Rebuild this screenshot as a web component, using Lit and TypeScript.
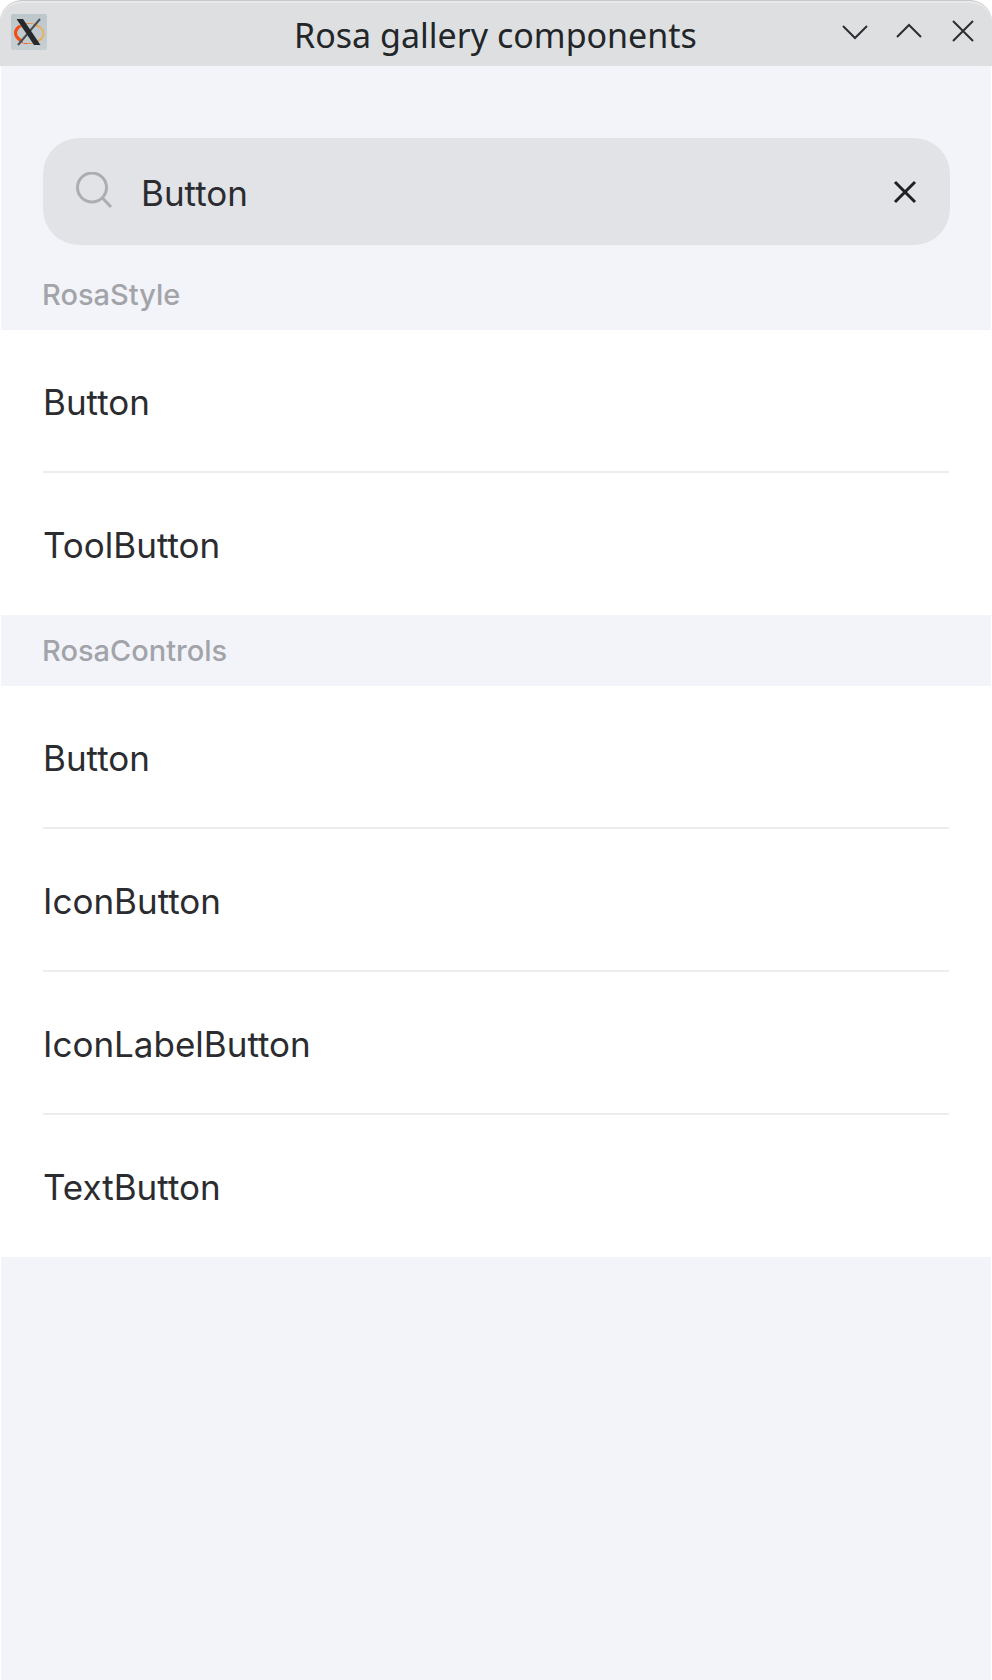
import { LitElement, html, css } from "lit";
import { customElement, property, state } from "lit/decorators.js";

interface Section {
  title: string;
  items: string[];
}

const SECTIONS: Section[] = [
  { title: "RosaStyle", items: ["Button", "ToolButton"] },
  { title: "RosaControls", items: ["Button", "IconButton", "IconLabelButton", "TextButton"] },
];

@customElement("title-bar")
class TitleBar extends LitElement {
  @property() heading = "";

  static styles = css`
    :host { display: block; }
    .bar {
      display: grid;
      grid-template-columns: 1fr auto 1fr;
      align-items: center;
      box-sizing: border-box;
      height: 66px;
      padding: 0 11px 0 10px;
      background: #dedfe1;
      border-top: 1px solid #c9cacc;
      box-shadow: inset 0 2px 0 #e8e9ea;
      border-radius: 22px 22px 0 0;
    }
    .logo { display: block; width: 38px; height: 38px; margin-bottom: 4px; }
    .heading {
      margin: 0;
      padding-top: 3px;
      font: 400 34px/44px "Noto Sans", sans-serif;
      color: #232629;
      white-space: nowrap;
    }
    .controls { display: flex; justify-content: flex-end; gap: 18px; }
    .control {
      display: block;
      width: 36px;
      height: 36px;
      margin-bottom: 6px;
      padding: 0;
      border: 0;
      background: none;
    }
    .glyph { display: block; fill: none; stroke: #2a2e32; stroke-width: 2; }
  `;

  render() {
    return html`
      <header class="bar">
        <svg class="logo" viewBox="0 0 38 38" aria-hidden="true">
          <defs>
            <linearGradient id="ring" x1="0" x2="1">
              <stop offset="0" stop-color="#f04e14" />
              <stop offset=".5" stop-color="#f08a4a" />
              <stop offset="1" stop-color="#e9b45c" />
            </linearGradient>
            <linearGradient id="tile" x1="0" y1="0" x2="0" y2="1">
              <stop offset="0" stop-color="#bcc7cc" />
              <stop offset="1" stop-color="#c6cfd2" />
            </linearGradient>
          </defs>
          <rect x="1" y="1" width="36" height="36" rx="2" fill="url(#tile)" />
          <ellipse cx="19.500" cy="20.500" rx="14" ry="9.500" fill="none" stroke="url(#ring)" stroke-width="2" />
          <path d="M10 13 C5 16 4 21 8 25 C10 27.500 13 29 17 29.500" fill="none" stroke="#f04e14" stroke-width="3" />
          <path d="M16 11 H23 L26 30 H13 L10 20 Z" fill="#c1cbcf" />
          <path d="M30 6 L8 32" stroke="#4a4f52" stroke-width="2" />
          <path d="M6.500 6 H13 L30.500 32 H24 Z" fill="#25292b" />
        </svg>
        <h1 class="heading">${this.heading}</h1>
        <div class="controls">
          <button class="control" aria-label="Minimize">
            <svg class="glyph" viewBox="0 0 36 36"><path d="M6 13 L18 25 L30 13" /></svg>
          </button>
          <button class="control" aria-label="Maximize">
            <svg class="glyph" viewBox="0 0 36 36"><path d="M6 24 L18 12 L30 24" /></svg>
          </button>
          <button class="control" aria-label="Close">
            <svg class="glyph" viewBox="0 0 36 36"><path d="M8 8 L28 28 M28 8 L8 28" /></svg>
          </button>
        </div>
      </header>
    `;
  }
}

@customElement("search-field")
class SearchField extends LitElement {
  @state() private query = "Button";

  static styles = css`
    :host { display: block; }
    .field {
      display: flex;
      align-items: center;
      box-sizing: border-box;
      height: 107px;
      padding: 0 27px 0 30px;
      border-radius: 36px;
      background: #e2e3e7;
    }
    .lens { display: block; flex: none; width: 40px; height: 40px; fill: none; stroke: #abaeb1; stroke-width: 3; }
    .input {
      flex: 1;
      min-width: 0;
      height: 48px;
      margin: 2px 0 0 28px;
      padding: 0;
      border: 0;
      outline: 0;
      background: none;
      font: 400 35px/48px Inter, sans-serif;
      color: #2b2c30;
    }
    .clear { display: block; flex: none; width: 36px; height: 36px; padding: 0; border: 0; background: none; }
    .cross { display: block; fill: none; stroke: #1f2023; stroke-width: 3; }
  `;

  render() {
    return html`
      <div class="field">
        <label for="query">
          <svg class="lens" viewBox="0 0 40 40" role="img" aria-label="Search">
            <circle cx="19" cy="15.500" r="14.500" />
            <path d="M29 25.500 L38 35" />
          </svg>
        </label>
        <input
          id="query"
          class="input"
          type="text"
          .value=${this.query}
          @input=${(e: Event) => (this.query = (e.target as HTMLInputElement).value)}
        />
        <button class="clear" aria-label="Clear" @click=${() => (this.query = "")}>
          <svg class="cross" viewBox="0 0 36 36"><path d="M8 8 L28 28 M28 8 L8 28" /></svg>
        </button>
      </div>
    `;
  }
}

@customElement("app-root")
class AppRoot extends LitElement {
  static styles = css`
    :host { display: block; background: #fff; }
    .window {
      display: flex;
      flex-direction: column;
      min-height: 100vh;
    }
    .content {
      flex: 1;
      margin: 0 1px;
      background: #f3f4f9;
      font-family: Inter, sans-serif;
    }
    .search { padding: 72px 41px 14px 42px; }
    .section-title {
      margin: 0;
      padding: 0 41px;
      font-size: 29px;
      font-weight: 500;
      line-height: 71px;
      color: #a2a4a9;
    }
    .list { margin: 0; padding: 0 42px; list-style: none; background: #fff; }
    .item { border-bottom: 2px solid #ededee; }
    .item:last-child { border-bottom: 1px solid #fff; }
    .link {
      display: block;
      padding: 48px 0 45px;
      font-size: 35px;
      line-height: 48px;
      color: #2b2c30;
      text-decoration: none;
    }
  `;

  render() {
    return html`
      <div class="window">
        <title-bar heading="Rosa gallery components"></title-bar>
        <main class="content">
          <search-field class="search"></search-field>
          ${SECTIONS.map(
            (section) => html`
              <section>
                <h2 class="section-title">${section.title}</h2>
                <ul class="list">
                  ${section.items.map(
                    (item) => html`<li class="item"><a class="link" href="#${section.title}-${item}">${item}</a></li>`
                  )}
                </ul>
              </section>
            `
          )}
        </main>
      </div>
    `;
  }
}
